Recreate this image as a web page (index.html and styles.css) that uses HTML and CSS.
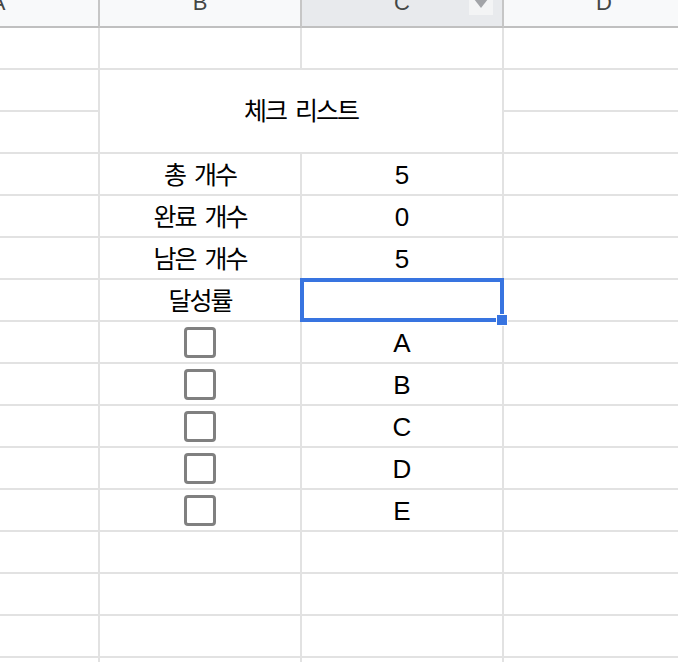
FILE: index.html
```html
<!DOCTYPE html>
<html lang="ko">
<head>
<meta charset="utf-8">
<title>체크 리스트</title>
<link rel="stylesheet" href="styles.css">
</head>
<body>
<div class="sheet">
  <div class="hd">A</div>
  <div class="hd">B</div>
  <div class="hd hd-sel">C<span class="dd"><svg width="24" height="24" viewBox="0 0 24 24"><polygon points="5,8 19,8 12,17" fill="#a2a4a8"/></svg></span></div>
  <div class="hd">D</div>

  <div class="c"></div><div class="c"></div><div class="c"></div><div class="c"></div>

  <div class="c"></div>
  <div class="c title ko">체크 리스트</div>
  <div class="c"></div>
  <div class="c"></div>
  <div class="c"></div>

  <div class="c"></div><div class="c ko">총 개수</div><div class="c">5</div><div class="c"></div>
  <div class="c"></div><div class="c ko">완료 개수</div><div class="c">0</div><div class="c"></div>
  <div class="c"></div><div class="c ko">남은 개수</div><div class="c">5</div><div class="c"></div>
  <div class="c"></div><div class="c ko">달성률</div><div class="c sel"><span class="sel-box"></span><span class="sel-handle"></span></div><div class="c"></div>

  <div class="c"></div><div class="c mid"><span class="cb"></span></div><div class="c">A</div><div class="c"></div>
  <div class="c"></div><div class="c mid"><span class="cb"></span></div><div class="c">B</div><div class="c"></div>
  <div class="c"></div><div class="c mid"><span class="cb"></span></div><div class="c">C</div><div class="c"></div>
  <div class="c"></div><div class="c mid"><span class="cb"></span></div><div class="c">D</div><div class="c"></div>
  <div class="c"></div><div class="c mid"><span class="cb"></span></div><div class="c">E</div><div class="c"></div>

  <div class="c"></div><div class="c"></div><div class="c"></div><div class="c"></div>
  <div class="c"></div><div class="c"></div><div class="c"></div><div class="c"></div>
  <div class="c"></div><div class="c"></div><div class="c"></div><div class="c"></div>
  <div class="c"></div><div class="c"></div><div class="c"></div><div class="c"></div>
</div>
</body>
</html>
```
FILE: styles.css
```css
html, body {
  margin: 0;
  padding: 0;
  background: #ffffff;
  width: 678px;
  height: 662px;
  overflow: hidden;
}

.sheet {
  display: grid;
  grid-template-columns: repeat(4, 202px);
  grid-auto-rows: 42px;
  margin-top: -14px;
  margin-left: -102px;
  font-family: "Liberation Sans", "Noto Sans CJK KR", Arial, sans-serif;
  color: #000000;
}

.hd {
  position: relative;
  display: flex;
  align-items: flex-end;
  justify-content: center;
  background: #f8f9fa;
  border-right: 2px solid #c6c6c6;
  border-bottom: 2px solid #c0c0c0;
  font-size: 22px;
  line-height: 22px;
  padding-bottom: 12px;
  color: #444746;
  box-sizing: border-box;
}

.hd-sel {
  background: #e8eaed;
}

.dd {
  position: absolute;
  left: 167px;
  top: 5px;
  width: 24px;
  height: 24px;
  background: #f3f4f5;
  display: block;
}

.dd svg {
  display: block;
}

.c {
  display: flex;
  align-items: flex-end;
  justify-content: center;
  border-right: 2px solid #e2e2e2;
  border-bottom: 2px solid #e2e2e2;
  font-size: 26px;
  line-height: 30px;
  padding-bottom: 4px;
  box-sizing: border-box;
  background: #ffffff;
}

.ko {
  font-size: 25px;
  letter-spacing: -2px;
  word-spacing: 4px;
}

.title {
  grid-column: span 2;
  grid-row: span 2;
  align-items: center;
  padding-bottom: 0;
}

.mid {
  align-items: center;
  padding-bottom: 0;
}

.cb {
  display: block;
  width: 26px;
  height: 25px;
  border: 3px solid #808080;
  border-radius: 4px;
}

.sel {
  position: relative;
}

.sel-box {
  position: absolute;
  left: -2px;
  top: -2px;
  right: -2px;
  bottom: -2px;
  border: 4px solid #3874e0;
  z-index: 2;
}

.sel-handle {
  position: absolute;
  left: 194px;
  top: 34px;
  width: 10px;
  height: 10px;
  background: #3874e0;
  border: 1px solid #ffffff;
  z-index: 3;
}
```
